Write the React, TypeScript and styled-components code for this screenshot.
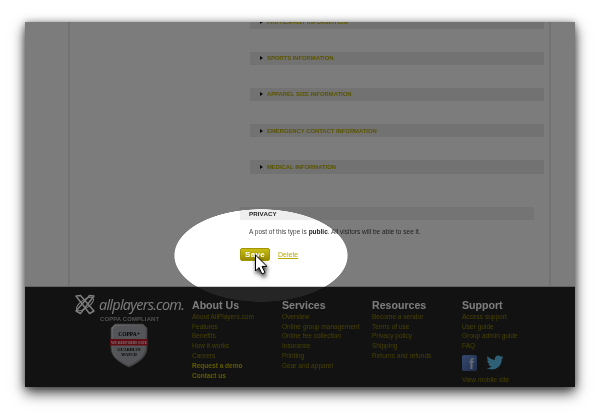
import React from "react";
import styled, { createGlobalStyle } from "styled-components";
import { FaTwitter } from "react-icons/fa";

const Global = createGlobalStyle`
  html, body { margin: 0; background: #fff; }
  body { font-family: "Liberation Sans", Arial, sans-serif; }
`;
const Stage = styled.div`
  width: 600px; height: 420px; padding: 22px 25px 33px; box-sizing: border-box; overflow: hidden;
`;
const Win = styled.div`
  position: relative; width: 550px; height: 365px;
  display: flex; flex-direction: column;
  box-shadow: 0 6px 13px rgba(0,0,0,.7), 0 1px 7px rgba(0,0,0,.4);
`;
const Clip = styled.div`
  flex: 1; display: flex; flex-direction: column; overflow: hidden; filter: blur(.42px); background: #fff;
`;
const Main = styled.main`
  height: 264px; margin: 0 24px 0 43px; overflow: hidden;
  border-left: 2px solid #ebebeb; border-right: 2px solid #ebebeb;
  padding-left: 180px; padding-right: 5px;
`;
const Rows = styled.div`
  margin-top: -6.6px; display: flex; flex-direction: column; gap: 22.8px;
`;
const Row = styled.div`
  height: 13.4px; background: #ebebeb; display: flex; align-items: center; padding-left: 10px; gap: 4px;
  font-size: 5.85px; font-weight: 700; letter-spacing: 0; color: #b8ad00; white-space: nowrap;
`;
const Arrow = styled.i`
  width: 0; height: 0; border-left: 3px solid #111; border-top: 2px solid transparent; border-bottom: 2px solid transparent;
`;
const Privacy = styled.section`
  margin: 33.4px 0 0 -10px; width: 294px;
`;
const PrivacyHead = styled.div`
  height: 13px; background: #eee; font-size: 6.2px; font-weight: 700; letter-spacing: .1px; color: #222;
  line-height: 13px; padding-left: 9px;
`;
const Note = styled.p`
  margin: 8px 0 0 9px; font-size: 6.5px; line-height: 8px; color: #444; white-space: nowrap;
  b { color: #222; }
`;
const Actions = styled.div`
  display: flex; align-items: center; gap: 8px; margin-top: 12.5px;
`;
const Save = styled.button`
  width: 30px; height: 12.5px; padding: 0; border: 1px solid #a09500; border-radius: 2px;
  background: linear-gradient(#c9bd14, #958a00); color: #fff; font: 700 8px "Liberation Sans", Arial, sans-serif; letter-spacing: .3px;
`;
const Del = styled.a`
  font-size: 7px; color: #b8ac00; text-decoration: underline;
`;
const Foot = styled.footer`
  flex: 1; background: #252525; border-top: 1px solid #ccc; display: flex; padding: 12px 0 0 50px; box-sizing: border-box;
`;
const Brand = styled.div`
  width: 117px; display: flex; flex-direction: column;
`;
const BrandTop = styled.div`
  display: flex; align-items: center; gap: 3px; height: 21px; margin: -5px 0 0 -1px;
`;
const Wordmark = styled.span`
  font: italic 400 14.4px "Open Sans", "Liberation Sans", sans-serif; letter-spacing: -.7px; color: #fff;
`;
const Compliant = styled.div`
  margin: 1px 0 1px 25px; font-size: 5.9px; font-weight: 700; letter-spacing: .15px; color: #a8a8a8; white-space: nowrap;
`;
const Shield = styled.svg`
  margin-left: 35px; display: block;
`;
const Col = styled.div`
  width: 90px;
`;
const Title = styled.h4`
  margin: 0 0 -.1px; font-size: 10.6px; line-height: 13px; font-weight: 700; color: #fff;
`;
const Link = styled.div<{ $bold?: boolean }>`
  font-size: 6.55px; line-height: 9.78px; white-space: nowrap; font-weight: ${p => (p.$bold ? 700 : 400)};
  color: ${p => (p.$bold ? "#c4b900" : "#918600")};
`;
const Social = styled.div`
  display: flex; align-items: center; gap: 8px; margin: 3px 0 3.5px;
`;
const Fb = styled.span`
  width: 15px; height: 16px; border-radius: 2px; background: linear-gradient(135deg, #6f96e0, #42609f);
  color: #cfd8ec; font: 700 15px "Liberation Sans", sans-serif; line-height: 18px; text-align: right; padding-right: 3px; box-sizing: border-box; overflow: hidden;
`;
const Bird = styled(FaTwitter)`
  width: 20px; height: 17px; color: #5fc8f5;
`;
const Dim = styled.div`
  position: absolute; inset: 0; background: rgba(0,0,0,.514); pointer-events: none;
  -webkit-mask-image: radial-gradient(ellipse 87px 46.5px at 236px 233.5px, transparent 99%, #000 100%);
  mask-image: radial-gradient(ellipse 87px 46.5px at 236px 233.5px, transparent 99%, #000 100%);
`;
const Cursor = styled.svg`
  position: absolute; left: 229px; top: 232px; filter: drop-shadow(1px 3px 2px rgba(0,0,0,.85));
`;

const cols: { t: string; l: string[]; b?: string[] }[] = [
  { t: "About Us", l: ["About AllPlayers.com", "Features", "Benefits", "How it works", "Careers"], b: ["Request a demo", "Contact us"] },
  { t: "Services", l: ["Overview", "Online group management", "Online fee collection", "Insurance", "Printing", "Gear and apparel"] },
  { t: "Resources", l: ["Become a vendor", "Terms of use", "Privacy policy", "Shipping", "Returns and refunds"] },
];

export default function App() {
  return (
    <Stage>
      <Global />
      <Win>
        <Clip>
          <Main>
            <Rows>
              {["PARTICIPANT INFORMATION", "SPORTS INFORMATION", "APPAREL SIZE INFORMATION", "EMERGENCY CONTACT INFORMATION", "MEDICAL INFORMATION"].map(s => (
                <Row key={s}><Arrow />{s}</Row>
              ))}
            </Rows>
            <Privacy>
              <PrivacyHead>PRIVACY</PrivacyHead>
              <Note>A post of this type is <b>public</b>. All visitors will be able to see it.</Note>
              <Actions><Save>Save</Save><Del>Delete</Del></Actions>
            </Privacy>
          </Main>
          <Foot>
            <Brand>
              <BrandTop>
                <svg width="22" height="21" viewBox="0 0 21 21" fill="none" stroke="#fff">
                  <path d="M1.5 2 L6 1.5 L19.5 17 L15 19.5 Z" strokeWidth="1.5" strokeLinejoin="round" />
                  <path d="M19.5 2 L15 1.5 L1.5 17 L6 19.5 Z" strokeWidth="1.5" strokeLinejoin="round" />
                  <ellipse cx="10.5" cy="10" rx="10" ry="4.2" transform="rotate(-35 10.5 10)" strokeWidth="1" />
                </svg>
                <Wordmark>allplayers.com.</Wordmark>
              </BrandTop>
              <Compliant>COPPA COMPLIANT</Compliant>
              <Shield width="38" height="45" viewBox="0 0 38 45">
                <defs>
                  <linearGradient id="sh" x1="0" y1="0" x2="1" y2="1">
                    <stop offset="0" stopColor="#d8d8d8" />
                    <stop offset="1" stopColor="#85858b" />
                  </linearGradient>
                </defs>
                <path d="M5 1 H33 L37 5 V25 C37 34 28 40 19 44 C10 40 1 34 1 25 V5 Z" fill="url(#sh)" stroke="#777" strokeWidth=".8" />
                <path d="M5 3 H33 L35 6 V25 C35 33 27 38 19 42 C11 38 3 33 3 25 V6 Z" fill="#aeb0b6" />
                <text x="19" y="13" textAnchor="middle" fontFamily="Liberation Serif, serif" fontWeight="700" fontSize="5.5" fill="#000">COPPA+</text>
                <rect x="0" y="16" width="38" height="6.5" fill="#c8182c" />
                <text x="19" y="21" textAnchor="middle" fontFamily="Liberation Serif, serif" fontWeight="700" fontSize="3.6" fill="#eee">WE KEEP KIDS SAFE</text>
                <text x="19" y="27.5" textAnchor="middle" fontFamily="Liberation Serif, serif" fontWeight="700" fontSize="4.2" fill="#000">GUARDIAN</text>
                <text x="19" y="32.5" textAnchor="middle" fontFamily="Liberation Serif, serif" fontWeight="700" fontSize="4.2" fill="#000">WATCH</text>
              </Shield>
            </Brand>
            {cols.map(c => (
              <Col key={c.t}>
                <Title>{c.t}</Title>
                {c.l.map(x => <Link key={x}>{x}</Link>)}
                {c.b?.map(x => <Link key={x} $bold>{x}</Link>)}
              </Col>
            ))}
            <Col>
              <Title>Support</Title>
              {["Access support", "User guide", "Group admin guide", "FAQ"].map(x => <Link key={x}>{x}</Link>)}
              <Social><Fb>f</Fb><Bird /></Social>
              <Link>View mobile site</Link>
            </Col>
          </Foot>
        </Clip>
        <Dim />
        <Cursor width="14" height="22" viewBox="0 0 14 22">
          <path d="M1.5 1 V17 L5 13.5 L8 20 L11 18.6 L8 12.4 L13 12.4 Z" fill="#fff" stroke="#000" strokeWidth="1" strokeLinejoin="round" />
        </Cursor>
      </Win>
    </Stage>
  );
}
